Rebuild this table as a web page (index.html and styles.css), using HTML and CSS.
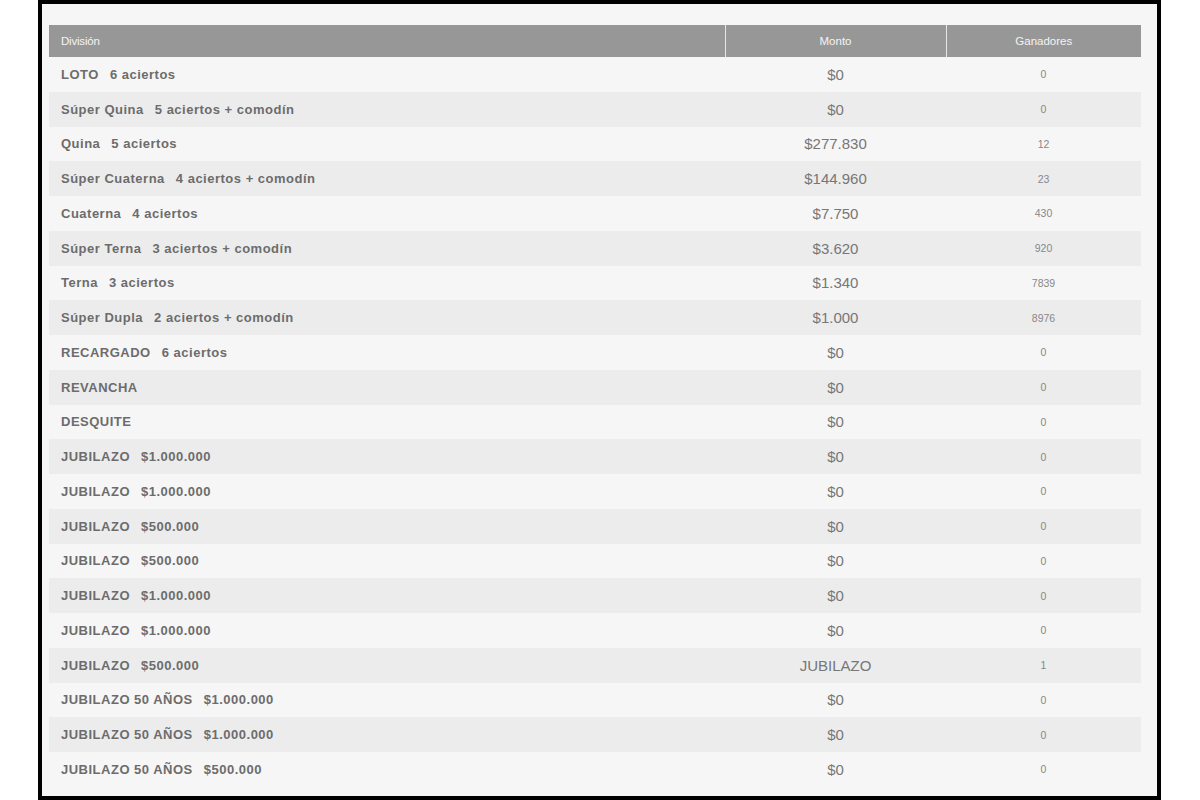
FILE: index.html
```html
<!DOCTYPE html>
<html lang="es">
<head>
<meta charset="utf-8">
<title>Premios</title>
<link rel="stylesheet" href="styles.css">
</head>
<body>
<div class="frame">
  <table class="prizes">
    <colgroup>
      <col class="c-div"><col class="c-monto"><col class="c-gan">
    </colgroup>
    <thead>
      <tr><th class="h-div">División</th><th>Monto</th><th>Ganadores</th></tr>
    </thead>
    <tbody>
      <tr><td class="div"><span class="name">LOTO</span>6 aciertos</td><td class="monto">$0</td><td class="gan">0</td></tr>
      <tr><td class="div"><span class="name">Súper Quina</span>5 aciertos + comodín</td><td class="monto">$0</td><td class="gan">0</td></tr>
      <tr><td class="div"><span class="name">Quina</span>5 aciertos</td><td class="monto">$277.830</td><td class="gan">12</td></tr>
      <tr><td class="div"><span class="name">Súper Cuaterna</span>4 aciertos + comodín</td><td class="monto">$144.960</td><td class="gan">23</td></tr>
      <tr><td class="div"><span class="name">Cuaterna</span>4 aciertos</td><td class="monto">$7.750</td><td class="gan">430</td></tr>
      <tr><td class="div"><span class="name">Súper Terna</span>3 aciertos + comodín</td><td class="monto">$3.620</td><td class="gan">920</td></tr>
      <tr><td class="div"><span class="name">Terna</span>3 aciertos</td><td class="monto">$1.340</td><td class="gan">7839</td></tr>
      <tr><td class="div"><span class="name">Súper Dupla</span>2 aciertos + comodín</td><td class="monto">$1.000</td><td class="gan">8976</td></tr>
      <tr><td class="div"><span class="name">RECARGADO</span>6 aciertos</td><td class="monto">$0</td><td class="gan">0</td></tr>
      <tr><td class="div"><span class="name">REVANCHA</span></td><td class="monto">$0</td><td class="gan">0</td></tr>
      <tr><td class="div"><span class="name">DESQUITE</span></td><td class="monto">$0</td><td class="gan">0</td></tr>
      <tr><td class="div"><span class="name">JUBILAZO</span>$1.000.000</td><td class="monto">$0</td><td class="gan">0</td></tr>
      <tr><td class="div"><span class="name">JUBILAZO</span>$1.000.000</td><td class="monto">$0</td><td class="gan">0</td></tr>
      <tr><td class="div"><span class="name">JUBILAZO</span>$500.000</td><td class="monto">$0</td><td class="gan">0</td></tr>
      <tr><td class="div"><span class="name">JUBILAZO</span>$500.000</td><td class="monto">$0</td><td class="gan">0</td></tr>
      <tr><td class="div"><span class="name">JUBILAZO</span>$1.000.000</td><td class="monto">$0</td><td class="gan">0</td></tr>
      <tr><td class="div"><span class="name">JUBILAZO</span>$1.000.000</td><td class="monto">$0</td><td class="gan">0</td></tr>
      <tr><td class="div"><span class="name">JUBILAZO</span>$500.000</td><td class="monto">JUBILAZO</td><td class="gan">1</td></tr>
      <tr><td class="div"><span class="name">JUBILAZO 50 AÑOS</span>$1.000.000</td><td class="monto">$0</td><td class="gan">0</td></tr>
      <tr><td class="div"><span class="name">JUBILAZO 50 AÑOS</span>$1.000.000</td><td class="monto">$0</td><td class="gan">0</td></tr>
      <tr><td class="div"><span class="name">JUBILAZO 50 AÑOS</span>$500.000</td><td class="monto">$0</td><td class="gan">0</td></tr>
    </tbody>
  </table>
</div>
</body>
</html>
```

FILE: styles.css
```css
html, body {
  margin: 0;
  padding: 0;
  background: #ffffff;
}

body {
  font-family: "Liberation Sans", Arial, sans-serif;
}

.frame {
  box-sizing: border-box;
  margin-left: 38px;
  width: 1123px;
  height: 800px;
  border: 4px solid #000;
  background: #f6f6f6;
  padding: 21px 16px 0 7px;
}

.prizes {
  width: 1092px;
  border-collapse: collapse;
  table-layout: fixed;
}

.c-div { width: 676px; }
.c-monto { width: 221px; }
.c-gan { width: 195px; }

.prizes th {
  height: 32px;
  padding: 0;
  background: #979797;
  color: #f4f4f4;
  font-size: 11.5px;
  font-weight: normal;
  text-align: center;
  border-left: 1px solid #e6e6e6;
}

.prizes th.h-div {
  text-align: left;
  padding-left: 12px;
  border-left: none;
  letter-spacing: -0.2px;
}

.prizes td {
  height: 34.75px;
  padding: 0;
    vertical-align: middle;
}

.prizes tbody tr:nth-child(even) td {
  background: #ececec;
}

.div {
  padding-left: 12px !important;
  color: #6c6c6c;
  font-size: 13px;
  font-weight: bold;
  letter-spacing: 0.5px;
}

.name {
  margin-right: 11px;
}

.monto {
  text-align: center;
  color: #777;
  font-size: 15px;
}

.gan {
  text-align: center;
  color: #888;
  font-size: 10.5px;
}
```
